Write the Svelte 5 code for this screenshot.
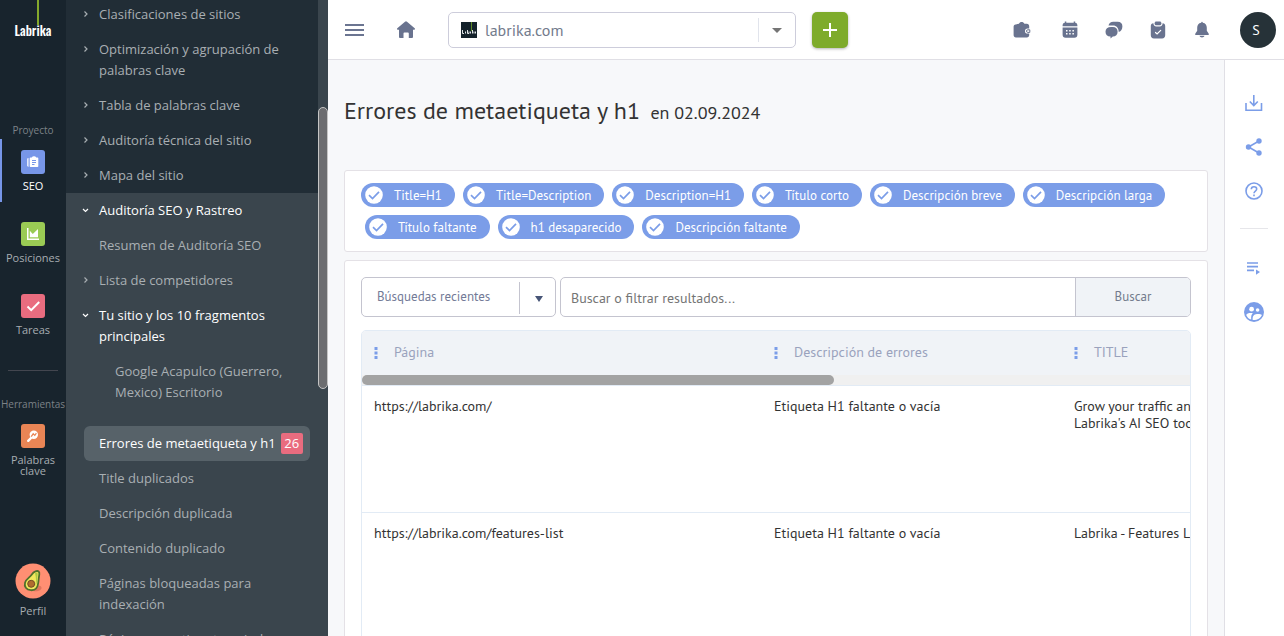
<script>
  let site = "labrika.com";
  let recent = "Búsquedas recientes";
  let query = "";

  // Sidebar tree, "section" items are drawn on the lighter background
  const topItems = [
    { label: "Clasificaciones de sitios" },
    { label: "Optimización y agrupación de palabras clave" },
    { label: "Tabla de palabras clave" },
    { label: "Auditoría técnica del sitio" },
    { label: "Mapa del sitio" },
  ];

  const sectionItems = [
    { label: "Auditoría SEO y Rastreo", arrow: "open" },
    { label: "Resumen de Auditoría SEO" },
    { label: "Lista de competidores", arrow: "closed" },
    { label: "Tu sitio y los 10 fragmentos principales", arrow: "open" },
    { label: "Google Acapulco (Guerrero, Mexico) Escritorio", nested: true },
    { label: "Errores de metaetiqueta y h1", active: true, count: 26 },
    { label: "Title duplicados" },
    { label: "Descripción duplicada" },
    { label: "Contenido duplicado" },
    { label: "Páginas bloqueadas para indexación" },
    { label: "Páginas con etiqueta noindex" },
  ];

  let filters = [
    "Title=H1",
    "Title=Description",
    "Description=H1",
    "Título corto",
    "Descripción breve",
    "Descripción larga",
    "Título faltante",
    "h1 desaparecido",
    "Descripción faltante",
  ].map((label) => ({ label, on: true }));

  const columns = ["Página", "Descripción de errores", "TITLE"];

  const rows = [
    {
      url: "https://labrika.com/",
      error: "Etiqueta H1 faltante o vacía",
      title: ["Grow your traffic and sales with", "Labrika's AI SEO tools"],
    },
    {
      url: "https://labrika.com/features-list",
      error: "Etiqueta H1 faltante o vacía",
      title: ["Labrika - Features List"],
    },
  ];
</script>

<div class="app">
  <nav class="rail" aria-label="Principal">
    <a class="logo" href="#inicio">
      <span class="logo-line"></span>
      <span class="logo-name">Labrika</span>
    </a>

    <p class="rail-title">Proyecto</p>
    <a class="rail-item current" href="#seo">
      <span class="tile blue">
        <svg viewBox="0 0 24 24" width="24" height="24">
          <path fill="#fff" d="M9.500 7.500h1.300a2.300 1.800 0 0 1 4.400 0h1.300a.8.8 0 0 1 .8.8v8a.8.8 0 0 1-.8.800h-7a.8.8 0 0 1-.8-.8v-8a.8.8 0 0 1 .8-.8zM6.200 8.500l1.300-.6v9l-1.300-.8z" />
          <path fill="none" stroke="#7796e8" stroke-width="1" d="M11 10.500h4M11 12.500h4M11 14.500h2.500" />
        </svg>
      </span>
      SEO
    </a>
    <a class="rail-item" href="#posiciones">
      <span class="tile green">
        <svg viewBox="0 0 24 24" width="24" height="24">
          <path fill="#fff" d="M6 6h1.500v10.500H18V18H6zM8.800 15.200V8.700l3 3.200L17 7v8.200z" />
        </svg>
      </span>
      Posiciones
    </a>
    <a class="rail-item" href="#tareas">
      <span class="tile pink">
        <svg viewBox="0 0 24 24" width="24" height="24">
          <path fill="none" stroke="#fff" stroke-width="2" d="M6.500 12.500l3.700 3.700 8-8.200" />
        </svg>
      </span>
      Tareas
    </a>
    <hr />
    <p class="rail-title">Herramientas</p>
    <a class="rail-item tools" href="#palabras">
      <span class="tile orange">
        <svg viewBox="0 0 24 24" width="24" height="24">
          <circle cx="12.800" cy="10.800" r="4.200" fill="#fff" />
          <path stroke="#fff" stroke-width="2.400" stroke-linecap="round" d="M10 14l-2.800 2.800" />
          <path fill="none" stroke="#e98555" stroke-width="1.200" d="M10.200 12.600l2-2.800 1.600 1.600 1.600-2.200" />
        </svg>
      </span>
      Palabras clave
    </a>

    <a class="profile" href="#perfil">
      <svg viewBox="0 0 36 36" width="36" height="36">
        <circle cx="18" cy="18" r="17.500" fill="#ff8f73" />
        <path fill="#df765e" d="M18 28c5 1 9-1 8.500-3.500-.4-2-3-2-5-1z" />
        <path fill="#f0e85c" stroke="#50702c" stroke-width="1.800" d="M20.500 8.300c2.800-1 4.200.5 3.800 3-.5 3.300-.7 5-1 8.200-.5 5-3 8-7.400 7.700-4.600-.2-7-3.600-5.800-7.700 1.200-3.900 5-5.300 6.700-8 .8-1.300 1.700-2.500 3.700-3.200z" />
        <path fill="#a9c846" d="M20 10c1.500-.8 3-.2 2.600 1.500-.4 4-.3 9-2.300 11.500 1-4 1-8-.3-13z" />
        <circle cx="16.200" cy="20.800" r="3.500" fill="#b06c2f" stroke="#754a25" stroke-width="1" />
      </svg>
      Perfil
    </a>
  </nav>

  <aside class="menu">
    <ul class="tree">
      {#each topItems as item}
        <li>
          <a href="#menu">
            <svg class="arrow" viewBox="0 0 8 8" width="8" height="8"><path d="M2.500 1.500L5 4 2.500 6.500" /></svg>
            <span>{item.label}</span>
          </a>
        </li>
      {/each}
    </ul>
    <ul class="tree section">
      {#each sectionItems as item}
        <li
          class:open={item.arrow === "open"}
          class:nested={item.nested}
          class:active={item.active}
        >
          <a href="#menu">
            {#if item.arrow}
              <svg class="arrow" viewBox="0 0 8 8" width="8" height="8">
                <path d={item.arrow === "open" ? "M1 3l2.500 2.500L6 3" : "M2.500 1.500L5 4 2.500 6.500"} />
              </svg>
            {/if}
            <span>{item.label}</span>
            {#if item.count}
              <b class="count">{item.count}</b>
            {/if}
          </a>
        </li>
      {/each}
    </ul>
  </aside>
  <div class="menu-scroll"><div class="menu-thumb"></div></div>

  <div class="page">
    <header class="topbar">
      <button class="icon-btn" aria-label="Menú">
        <svg viewBox="0 0 20 14" width="20" height="14"><path stroke="#6b7591" stroke-width="2" d="M0 2h19M0 7h19M0 12h19" /></svg>
      </button>
      <a class="home" href="#inicio" aria-label="Inicio">
        <svg viewBox="0 0 20 20" width="20" height="20">
          <path fill="#69738f" d="M9 1.700a1.500 1.500 0 0 1 2 0l7.700 6.600c.6.600.3 1.400-.5 1.400H17v7.100c0 .8-.5 1.200-1.200 1.200h-3v-4.600c0-.6-.3-.9-.9-.9H8.400c-.6 0-.9.3-.9.900V18H4.200c-.7 0-1.200-.4-1.200-1.200V9.700H1.800c-.8 0-1.100-.8-.5-1.400z" />
        </svg>
      </a>
      <div class="site">
        <svg class="favicon" viewBox="0 0 16 16" width="16" height="16">
          <path fill="#14222b" d="M0 0h16v16H0z" />
          <path fill="#5c8a26" d="M10 0h1v9h-1z" />
          <path fill="none" stroke="#dfe3e5" stroke-width="1" d="M1.500 8v3.500H3M4.500 9.500v2M6.500 8v3.500h1.500v-2M9.500 9.500v2M11.500 8v3.500M13 9.500v2M14.500 9.500v2" />
        </svg>
        <select bind:value={site} aria-label="Sitio">
          <option>labrika.com</option>
        </select>
        <span class="split"></span>
        <svg class="caret" viewBox="0 0 10 5" width="10" height="5"><path fill="#757575" d="M0 0h10L5 5z" /></svg>
      </div>
      <button class="add" aria-label="Añadir proyecto">
        <svg viewBox="0 0 14 14" width="14" height="14"><path stroke="#fff" stroke-width="2" d="M7 0v14M0 7h14" /></svg>
      </button>

      <div class="tools-right">
        <button class="icon-btn wallet" aria-label="Saldo">
          <svg viewBox="0 0 20 20" width="20" height="20">
            <path fill="#69738f" d="M7 3.800c.8-2.400 4.400-2.400 5.400 0h2.400c1.500 0 2.400 1 2.400 2.400v2.200h-1.600a2.300 2.300 0 0 0 0 5.200h1.600v1.500c0 1.500-.9 2.400-2.400 2.400H4c-1.500 0-2.400-.9-2.400-2.400V6.800c0-1.500.6-2.200 2-2.400z" />
            <path fill="none" stroke="#69738f" d="M17.800 9.800h-2a1.300 1.300 0 0 0 0 2.600h2z" />
          </svg>
        </button>
        <button class="icon-btn" aria-label="Calendario">
          <svg viewBox="0 0 20 20" width="20" height="20">
            <path fill="#69738f" d="M4.800 1.500h1.500v1.200h7.400V1.500h1.500v1.300c1.400.2 2.200 1.200 2.200 2.600v.8H2.600v-.8c0-1.400.8-2.400 2.200-2.600zM2.600 7.500h14.800v7.300c0 1.900-1.100 3-3 3H5.600c-1.900 0-3-1.100-3-3z" />
            <path fill="#fff" d="M6 10h1.500v1.500H6zM9.200 10h1.500v1.500H9.200zM12.400 10h1.500v1.500h-1.500zM6 13h1.500v1.500H6zM9.200 13h1.500v1.500H9.200zM12.400 13h1.500v1.500h-1.500z" />
          </svg>
        </button>
        <button class="icon-btn" aria-label="Mensajes">
          <svg viewBox="0 0 20 20" width="20" height="20">
            <path fill="#69738f" d="M4.500 5.500C5 3 6.700 1.700 9.300 1.700h4.400c2.900 0 4.700 1.700 4.700 4.500 0 2.900-1.300 5.100-3.600 5.900C14.500 8 12.600 5.500 9 5.500z" />
            <path fill="#69738f" d="M7.200 6.900h1.600c3 0 4.800 1.800 4.800 4.800s-1.800 4.800-4.800 4.900L6.500 18.500v-2c-3.200 0-5-1.700-5-4.800s2-4.800 5.700-4.800z" />
          </svg>
        </button>
        <button class="icon-btn" aria-label="Tareas">
          <svg viewBox="0 0 20 20" width="20" height="20">
            <path fill="#69738f" d="M7.500 1.500h5l1 1.500c0 1.600-.8 2.300-2 2.300h-3c-1.300 0-2-.7-2-2.300z" />
            <path fill="#69738f" d="M5.400 3.300c0 2 1.100 3.200 3 3.200h3.200c2 0 3-1.200 3-3.200 1.700.1 2.600 1.100 2.600 2.800v9.200c0 2-1.100 3.100-3.100 3.100H5.900c-2 0-3.100-1.100-3.100-3.100V6.100c0-1.700.9-2.700 2.600-2.800z" />
            <path fill="none" stroke="#fff" stroke-width="1.200" stroke-linecap="round" d="M7.500 12.500l1.600 1.500 3.600-3.600" />
          </svg>
        </button>
        <button class="icon-btn" aria-label="Notificaciones">
          <svg viewBox="0 0 20 20" width="20" height="20">
            <path fill="#69738f" d="M9.200 2.700c0-1.300 1.600-1.300 1.600 0 2.800.4 4 2.400 4 5v3.100l1.800 2.600c.6.900.1 1.600-.9 1.600H4.300c-1 0-1.500-.7-.9-1.600l1.800-2.600V7.700c0-2.600 1.200-4.600 4-5zM7.500 15.800h5c-.6 2.200-4.400 2.200-5 0z" />
          </svg>
        </button>
        <button class="avatar">S</button>
      </div>
    </header>

    <div class="body">
      <main>
        <h1>Errores de metaetiqueta y h1 <small>en 02.09.2024</small></h1>

        <section class="card chips">
          {#each filters as filter}
            <button
              class="chip"
              aria-pressed={filter.on}
              on:click={() => (filter.on = !filter.on)}
            >
              <svg viewBox="0 0 18 18" width="18" height="18">
                <circle cx="9" cy="9" r="8.800" fill="#fff" />
                {#if filter.on}
                  <path fill="none" stroke="#7b9de8" stroke-width="1.700" d="M4 9.200l3.500 3.300L14 5.800" />
                {/if}
              </svg>
              {filter.label}
            </button>
          {/each}
        </section>

        <section class="card results">
          <form class="search" on:submit|preventDefault>
            <div class="recent">
              <select bind:value={recent} aria-label="Búsquedas recientes">
                <option>Búsquedas recientes</option>
              </select>
              <span class="split"></span>
              <svg class="caret" viewBox="0 0 8 6" width="8" height="6"><path fill="#475577" d="M0 0h8L4 6z" /></svg>
            </div>
            <div class="field">
              <input
                type="text"
                bind:value={query}
                placeholder="Buscar o filtrar resultados..."
                aria-label="Buscar o filtrar resultados"
              />
              <button type="submit">Buscar</button>
            </div>
          </form>

          <div class="table-wrapper">
            <table>
              <thead>
                <tr>
                  {#each columns as column}
                    <th>
                      <svg viewBox="0 0 4 12" width="4" height="12"><path fill="#7b9de8" d="M.5 0h3v3h-3zM.5 4.500h3v3h-3zM.5 9h3v3h-3z" /></svg>
                      {column}
                    </th>
                  {/each}
                </tr>
              </thead>
              <tbody>
                {#each rows as row}
                  <tr>
                    <td>{row.url}</td>
                    <td>{row.error}</td>
                    <td>
                      {#each row.title as line}
                        <div>{line}</div>
                      {/each}
                    </td>
                  </tr>
                {/each}
              </tbody>
            </table>
            <div class="table-scroll"><div class="table-thumb"></div></div>
          </div>
        </section>
      </main>

      <aside class="actions">
        <button class="icon-btn" aria-label="Descargar">
          <svg viewBox="0 0 20 20" width="20" height="20"><path fill="none" stroke="#7b9de8" stroke-width="1.600" d="M2 10v7.200h15.500V10M9.800 2v10.500M5.800 8.500l4 4 4-4" /></svg>
        </button>
        <button class="icon-btn" aria-label="Compartir">
          <svg viewBox="0 0 20 20" width="20" height="20">
            <path fill="none" stroke="#7b9de8" stroke-width="1.600" d="M15 4L4.500 10 15 16" />
            <g fill="#7b9de8"><circle cx="15" cy="4" r="2.700" /><circle cx="4.500" cy="10" r="2.700" /><circle cx="15" cy="16" r="2.700" /></g>
          </svg>
        </button>
        <button class="icon-btn" aria-label="Ayuda">
          <svg viewBox="0 0 20 20" width="20" height="20">
            <circle cx="10" cy="10" r="8" fill="none" stroke="#7b9de8" stroke-width="1.600" />
            <path fill="none" stroke="#7b9de8" stroke-width="1.600" d="M7.300 8.200c0-3.300 5.400-3.300 5.400-.2 0 2-2.700 2.200-2.700 4.300M10 13.500v1.700" />
          </svg>
        </button>
        <hr />
        <button class="icon-btn" aria-label="Lista">
          <svg viewBox="0 0 20 20" width="20" height="20">
            <path stroke="#7b9de8" stroke-width="1.700" d="M3 5h11M3 8.700h11M3 12.400h7" />
            <path fill="#7b9de8" d="M12 11.500l4 2.500-4 2.700z" />
          </svg>
        </button>
        <button class="icon-btn" aria-label="Comunidad">
          <svg viewBox="0 0 20 20" width="20" height="20">
            <circle cx="10" cy="10" r="10" fill="#7b9de8" />
            <g fill="#fff">
              <circle cx="7.600" cy="7.200" r="2.400" /><circle cx="13.600" cy="8" r="1.800" />
              <path d="M2.200 13c1-1.700 3.500-2.300 6.700-1.700-1.500 1.200-1.900 3-1.700 6.300-2.300-.7-4.100-2.300-5-4.600zM8.700 18c-.3-3.800 1-5.700 4.300-6 2.200-.2 3.800.2 4.900 1-1.200 3.200-4.700 5.300-9.200 5z" />
            </g>
          </svg>
        </button>
      </aside>
    </div>
  </div>
</div>

<style>
  :global(body) {
    background: #f7f8fa;
  }

  .app {
    display: flex;
    height: 100vh;
    overflow: hidden;
    font-family: "PT Sans", Lato, sans-serif;
    font-size: 14px;
    color: #333;
  }

  button,
  input,
  select {
    font: inherit;
    border: none;
    background: none;
    padding: 0;
  }

  button {
    cursor: pointer;
  }

  a {
    color: inherit;
    text-decoration: none;
  }

  svg {
    display: block;
    flex: none;
  }

  /* left rail */
  .rail {
    flex: none;
    width: 66px;
    display: flex;
    flex-direction: column;
    align-items: center;
    background: #18242d;
    color: #a7adb1;
    font: 11px/14px "Open Sans", "Noto Sans", sans-serif;
  }

  .logo {
    position: relative;
    height: 123px;
    color: #fff;
    font: 500 13px/20px Oswald, "Liberation Sans Narrow", "Roboto Condensed", Roboto, sans-serif;
  }

  .logo-name {
    display: block;
    padding-top: 20px;
  }

  .logo-line {
    position: absolute;
    left: 60%;
    width: 2px;
    height: 25px;
    background: #84a92c;
  }

  .rail-title {
    margin: 0;
    font-size: 10px;
    color: #7c8287;
  }

  .rail-item {
    box-sizing: border-box;
    width: 100%;
    height: 63px;
    margin-bottom: 9px;
    padding-top: 11px;
    display: flex;
    flex-direction: column;
    align-items: center;
    gap: 5px;
    text-align: center;
  }

  .current {
    margin-top: 2px;
    color: #fff;
    background: linear-gradient(#7796e8, #7796e8) left / 2px 100% no-repeat;
  }

  .tools {
    line-height: 11px;
    padding: 13px 8px 0;
    gap: 6px;
  }

  .tile {
    width: 24px;
    height: 24px;
    border-radius: 3px;
  }

  .blue {
    background: #7796e8;
  }

  .green {
    background: #9acb54;
  }

  .pink {
    background: #e96c7f;
  }

  .orange {
    background: #e98555;
  }

  .rail hr {
    width: 50px;
    margin: 15px 0 26px;
    border: none;
    border-top: 1px solid #43464f;
  }

  .profile {
    margin-top: auto;
    padding-bottom: 18px;
    display: flex;
    flex-direction: column;
    align-items: center;
    gap: 5px;
  }

  /* menu */
  .menu {
    flex: none;
    width: 252px;
    overflow: hidden;
    background: #3a454d;
    color: #a9afb3;
    font: 13px/21px "Open Sans", "Noto Sans", sans-serif;
  }

  .tree {
    list-style: none;
    margin: 0;
    padding: 0;
    background: #212d36;
  }

  .tree:first-child {
    margin-top: -3px;
  }

  .section {
    background: #3a454d;
  }

  .tree li {
    padding: 0 8px 0 18px;
  }

  .tree a {
    position: relative;
    display: flex;
    gap: 5px;
    padding: 7px 0 7px 15px;
  }

  .tree span {
    max-width: 190px;
  }

  .arrow {
    position: absolute;
    left: -2px;
    top: 13px;
    fill: none;
    stroke: currentColor;
    stroke-width: 1.2px;
  }

  .open {
    color: #fff;
  }

  .nested {
    margin-bottom: 16px;
  }

  .nested a {
    padding-left: 31px;
  }

  .active a {
    color: #fff;
    background: #576269;
    border-radius: 6px;
  }

  .active span {
    max-width: none;
  }

  .count {
    width: 22px;
    height: 21px;
    border-radius: 2px;
    background: #e96c7f;
    text-align: center;
    font-weight: 400;
  }

  .menu-scroll {
    flex: none;
    width: 10px;
    background: #3a454d;
  }

  .menu-thumb {
    box-sizing: border-box;
    height: 282px;
    margin-top: 107px;
    border: 1px solid #c5c5c5;
    border-radius: 5px;
    background: #6c6d70;
  }

  /* page */
  .page {
    flex: 1;
    min-width: 0;
    display: flex;
    flex-direction: column;
  }

  .topbar {
    flex: none;
    height: 59px;
    padding: 0 8px 0 17px;
    display: flex;
    align-items: center;
    background: #fff;
    border-bottom: 1px solid #e0dfe5;
  }

  .home {
    margin: 0 32px 0 31px;
  }

  .site {
    position: relative;
    flex: 0 1 348px;
    height: 36px;
  }

  .site select {
    box-sizing: border-box;
    width: 100%;
    height: 36px;
    padding: 0 40px 0 36px;
    appearance: none;
    border: 1px solid #cdcddb;
    border-radius: 5px;
    font-size: 16px;
    color: #737b8c;
  }

  .favicon {
    position: absolute;
    left: 13px;
    top: 10px;
  }

  .site .split {
    position: absolute;
    right: 37px;
    top: 6px;
    height: 24px;
    border-left: 1px solid #e1e4ec;
  }

  .site .caret {
    position: absolute;
    right: 14px;
    top: 16px;
    pointer-events: none;
  }

  .add {
    width: 36px;
    height: 36px;
    margin-left: 16px;
    display: grid;
    place-items: center;
    border-radius: 5px;
    background: #7eab2b;
    box-shadow: 0 1px 3px rgba(0, 0, 0, 0.3);
  }

  .tools-right {
    margin-left: auto;
    display: flex;
    align-items: center;
    gap: 24px;
  }

  .wallet {
    margin-right: 4px;
  }

  .avatar {
    width: 36px;
    height: 36px;
    margin-left: 4px;
    padding-right: 4px;
    border-radius: 50%;
    background: #263238;
    color: #fff;
  }

  .body {
    flex: 1;
    min-height: 0;
    display: flex;
  }

  main {
    flex: 1;
    min-width: 0;
    padding: 0 16px;
    background: #f7f8fa;
  }

  h1 {
    margin: 0;
    padding: 36px 0 44px;
    font-size: 24px;
    line-height: 30px;
    font-weight: 400;
  }

  small {
    margin-left: 4px;
    font-size: 18px;
    line-height: 20px;
  }

  .card {
    background: #fff;
    border: 1px solid #e4e1e6;
    border-radius: 3px;
  }

  .chips {
    display: flex;
    flex-wrap: wrap;
    padding: 8px 16px;
  }

  .chip {
    display: flex;
    align-items: center;
    gap: 11px;
    height: 24px;
    margin: 4px;
    padding: 0 13px 0 4px;
    border-radius: 12px;
    background: #7b9de8;
    color: #fff;
    font-size: 13px;
  }

  .chip:first-child {
    margin-left: 0;
  }

  .results {
    margin-top: 8px;
    padding: 16px;
  }

  .search {
    display: flex;
    gap: 4px;
    margin-bottom: 13px;
  }

  .recent {
    position: relative;
    flex: none;
    width: 195px;
  }

  .recent select {
    width: 100%;
    height: 40px;
    padding: 0 40px 2px 15px;
    appearance: none;
    border: 1px solid #c4c4cf;
    border-radius: 5px;
    font-size: 13px;
    color: #737b97;
  }

  .recent .split {
    position: absolute;
    right: 36px;
    top: 5px;
    height: 32px;
    border-left: 1px solid #c4c4cf;
  }

  .recent .caret {
    position: absolute;
    right: 13px;
    top: 19px;
    pointer-events: none;
  }

  .field {
    flex: 1;
    min-width: 0;
    height: 38px;
    display: flex;
    overflow: hidden;
    border: 1px solid #c4c4cf;
    border-radius: 5px;
  }

  .field input {
    flex: 1;
    min-width: 0;
    padding: 2px 10px 0;
  }

  .field input::placeholder {
    color: #757575;
  }

  .field button {
    width: 115px;
    padding-bottom: 2px;
    border-left: 1px solid #c4c4cf;
    background: #f0f3f7;
    color: #737b8c;
    font-size: 13px;
  }

  .table-wrapper {
    position: relative;
    overflow: hidden;
    border: 1px solid #e2ebf5;
    border-radius: 5px;
  }

  table {
    table-layout: fixed;
    width: 1453px;
    border-collapse: collapse;
  }

  th,
  td {
    box-sizing: border-box;
  }

  th {
    height: 54px;
    padding: 0 12px 12px 32px;
    position: relative;
    text-align: left;
    font-weight: 400;
    color: #9aa2bd;
    background: #f0f3f7;
    border-bottom: 1px solid #e2ebf5;
  }

  th:first-child {
    width: 400px;
  }

  th:nth-child(2) {
    width: 300px;
  }

  th svg {
    position: absolute;
    left: 12px;
    top: 16px;
  }

  td {
    height: 127px;
    padding: 12px;
    line-height: 17px;
    vertical-align: top;
    white-space: nowrap;
    border-bottom: 1px solid #e2ebf5;
  }

  .table-scroll {
    position: absolute;
    left: 0;
    right: 0;
    top: 44px;
    height: 10px;
    background: #f0f0f0;
  }

  .table-thumb {
    width: 57%;
    height: 10px;
    border-radius: 5px;
    background: #a3a3a3;
  }

  /* right actions */
  .actions {
    flex: none;
    width: 58px;
    padding: 33px 1px 0 0;
    display: flex;
    flex-direction: column;
    align-items: center;
    gap: 24px;
    background: #fff;
    border-left: 1px solid #e0dfe5;
  }

  .actions hr {
    width: 28px;
    margin: 3px 0 5px;
    border: none;
    border-top: 1px solid #e6e6ea;
  }
</style>
